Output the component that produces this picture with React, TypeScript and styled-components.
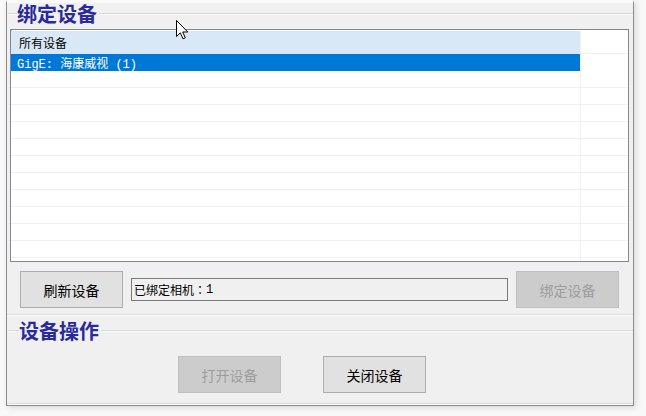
import React from "react";
import styled, { createGlobalStyle } from "styled-components";

const Global = createGlobalStyle`
  html, body { margin: 0; padding: 0; background: #f7f7f7; }
  * { box-sizing: border-box; }
`;

const Desktop = styled.div`
  position: relative;
  width: 646px;
  height: 416px;
  overflow: hidden;
  background: #f8f8f8;
  font-family: "Noto Sans CJK SC", sans-serif;
`;

const Window = styled.div`
  margin-left: 6px;
  width: 628px;
  height: 406px;
  background: #f0f0f0;
  border: 1px solid #8c8c8c;
  border-top: 3px solid #f9f9f9;
  box-shadow: 2px 2px 6px rgba(0, 0, 0, 0.12);
  display: flex;
  flex-direction: column;
`;

const GroupHeader = styled.div<{ $top: number }>`
  display: flex;
  align-items: center;
  height: 22px;
  margin-top: ${(p) => p.$top}px;
  padding-left: 1px;
`;

const Rule = styled.div<{ $w?: number }>`
  height: 2px;
  border-top: 1px solid #d8d8d8;
  border-bottom: 1px solid #fbfbfb;
  ${(p) => (p.$w ? `width: ${p.$w}px; flex: none;` : `flex: 1;`)}
`;

const GroupTitle = styled.span`
  font-family: "Noto Sans CJK SC", sans-serif;
  font-weight: 700;
  font-size: 20px;
  line-height: 22px;
  color: #2a2a9c;
  padding: 0 2px 0 0;
`;

const ListView = styled.div`
  margin: 4px 4px 0 3px;
  height: 233px;
  background: #ffffff;
  border: 1px solid #828790;
  box-shadow: inset 1px 0 0 #b4b4b4;
  padding-top: 1px;
  overflow: hidden;
`;

const Row = styled.div<{ $h: number }>`
  display: grid;
  grid-template-columns: 570px 1fr;
  height: ${(p) => p.$h}px;
`;

const Cell = styled.div<{ $kind?: "hot" | "sel"; $indent?: number; $last?: boolean }>`
  display: flex;
  align-items: center;
  padding-left: ${(p) => p.$indent ?? 6}px;
  border-bottom: 1px solid ${(p) => (p.$kind ? "transparent" : "#f0f0f0")};
  border-right: ${(p) => (p.$last ? "none" : "1px solid #f0f0f0")};
  background: ${(p) =>
    p.$kind === "hot" ? "#d9e8f7" : p.$kind === "sel" ? "#0078d7" : "#ffffff"};
  color: ${(p) => (p.$kind === "sel" ? "#ffffff" : "#000000")};
  font-size: 12px;
  white-space: nowrap;
`;

const MonoText = styled.span`
  font-family: "Liberation Mono", "Noto Sans CJK SC", monospace;
  font-size: 12px;
`;

const CjkText = styled.span`
  font-family: "Noto Sans CJK SC", sans-serif;
  font-size: 12px;
`;

const CenteredPunct = styled.span`
  font-family: "Noto Sans CJK TC", sans-serif;
  font-size: 12px;
`;

const ButtonRow = styled.div<{ $top: number; $left: number; $gap: number }>`
  display: flex;
  align-items: center;
  margin-top: ${(p) => p.$top}px;
  padding-left: ${(p) => p.$left}px;
  gap: ${(p) => p.$gap}px;
  height: 37px;
`;

const Button = styled.button<{ $disabled?: boolean }>`
  width: 103px;
  height: 37px;
  flex: none;
  margin: 0;
  padding: 0;
  background: ${(p) => (p.$disabled ? "#cccccc" : "#e1e1e1")};
  border: 1px solid ${(p) => (p.$disabled ? "#bfbfbf" : "#adadad")};
  color: ${(p) => (p.$disabled ? "#9d9d9d" : "#000000")};
  font-family: "Noto Sans CJK SC", sans-serif;
  font-size: 14px;
  cursor: default;
`;

const StatusBox = styled.div`
  width: 377px;
  height: 23px;
  flex: none;
  border: 1px solid #7a7a7a;
  background: #f0f0f0;
  display: flex;
  align-items: center;
  padding-left: 2px;
  font-family: "Noto Sans CJK SC", sans-serif;
  font-size: 12px;
  color: #000;
  white-space: pre;
`;

const BottomRule = styled.div<{ $top: number }>`
  margin-top: ${(p) => p.$top}px;
  height: 2px;
  border-top: 1px solid #dcdcdc;
  border-bottom: 1px solid #fbfbfb;
`;

const Cursor = styled.svg`
  position: absolute;
  left: 176px;
  top: 20px;
  width: 13px;
  height: 20px;
  pointer-events: none;
`;

const rowCount = 13;

export default function App() {
  return (
    <>
      <Global />
      <Desktop>
        <Window>
          <GroupHeader $top={0}>
            <Rule $w={9} />
            <GroupTitle>绑定设备</GroupTitle>
            <Rule />
          </GroupHeader>
          <ListView>
            <Row $h={23}>
              <Cell $kind="hot" $indent={8}>
                <CjkText>所有设备</CjkText>
              </Cell>
              <Cell $last />
            </Row>
            <Row $h={17}>
              <Cell $kind="sel" $indent={6}>
                <MonoText>GigE: 海康威视 (1)</MonoText>
              </Cell>
              <Cell $last />
            </Row>
            {Array.from({ length: rowCount }).map((_, i) => (
              <Row $h={17} key={i}>
                <Cell />
                <Cell $last />
              </Row>
            ))}
          </ListView>
          <ButtonRow $top={9} $left={13} $gap={8}>
            <Button>刷新设备</Button>
            <StatusBox>
              已绑定相机<CenteredPunct>：</CenteredPunct>
              <MonoText>1</MonoText>
            </StatusBox>
            <Button $disabled>绑定设备</Button>
          </ButtonRow>
          <BottomRule $top={6} />
          <GroupHeader $top={4}>
            <Rule $w={11} />
            <GroupTitle>设备操作</GroupTitle>
            <Rule />
          </GroupHeader>
          <ButtonRow $top={14} $left={171} $gap={42}>
            <Button $disabled>打开设备</Button>
            <Button>关闭设备</Button>
          </ButtonRow>
          <BottomRule $top={10} />
        </Window>
        <Cursor viewBox="0 0 13 20">
          <path
            d="M0.5 0.5 L0.5 16.5 L4.3 12.8 L7 18.8 L9.3 17.8 L6.7 12 L11.8 12 Z"
            fill="#ffffff"
            stroke="#000000"
            strokeWidth="1"
            strokeLinejoin="miter"
          />
        </Cursor>
      </Desktop>
    </>
  );
}
